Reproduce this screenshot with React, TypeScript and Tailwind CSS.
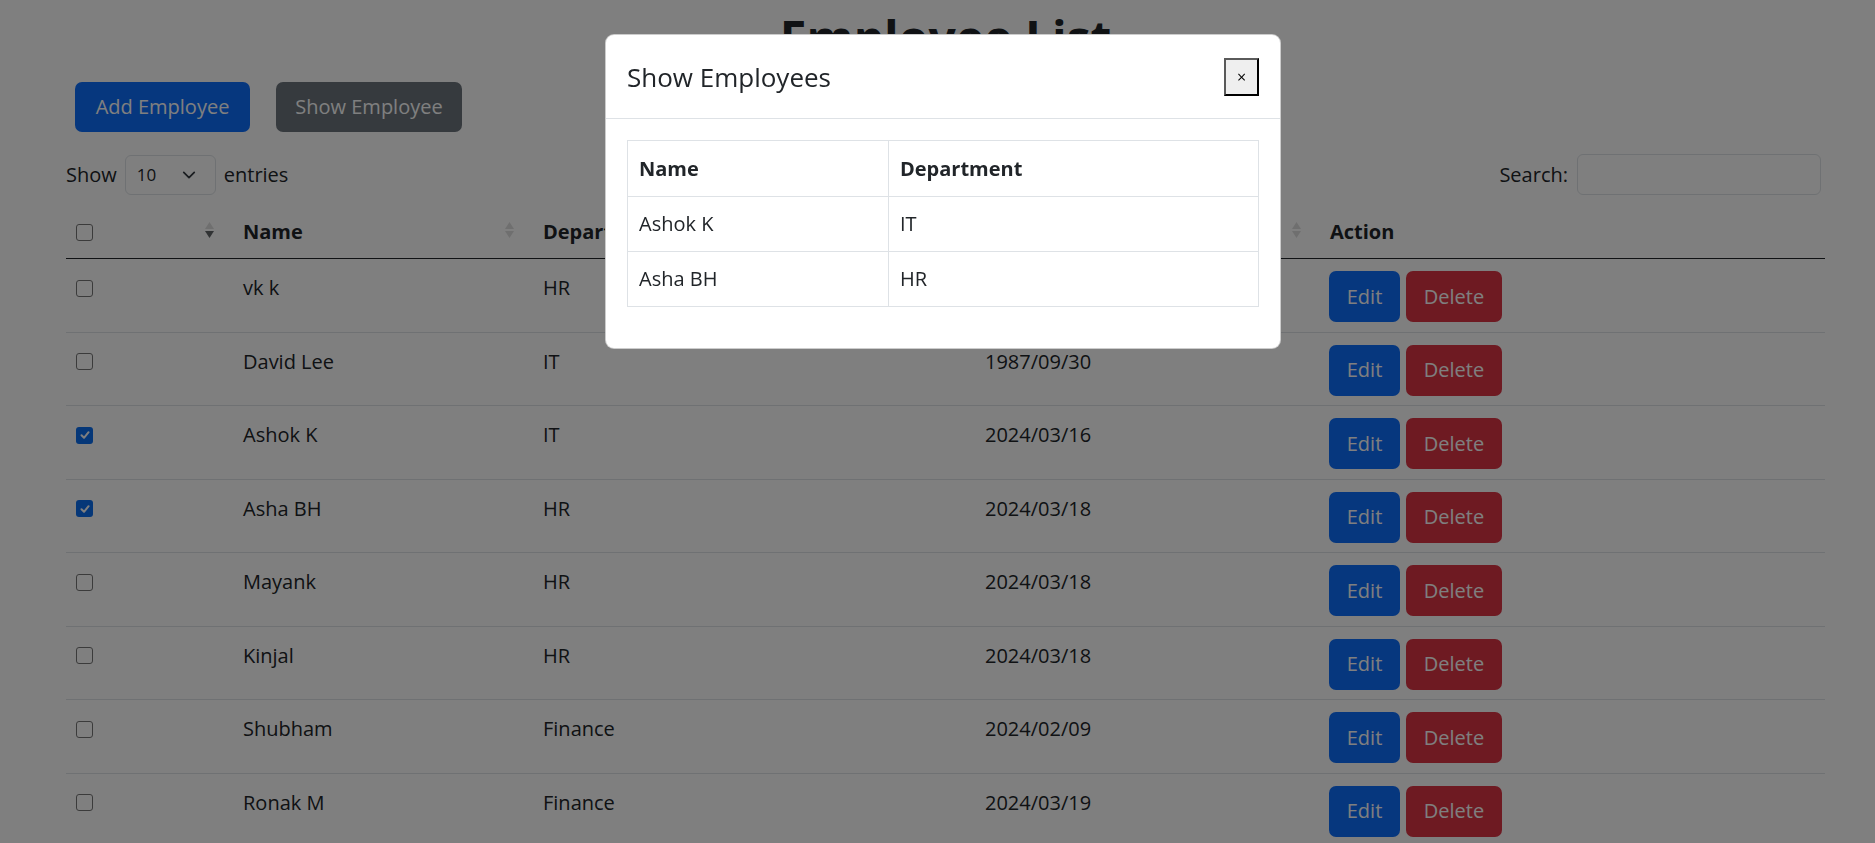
import React from "react";

interface Employee {
  name: string;
  department: string;
  date: string;
  checked: boolean;
}

const EMPLOYEES: Employee[] = [
  { name: "vk k", department: "HR", date: "2024/03/15", checked: false },
  { name: "David Lee", department: "IT", date: "1987/09/30", checked: false },
  { name: "Ashok K", department: "IT", date: "2024/03/16", checked: true },
  { name: "Asha BH", department: "HR", date: "2024/03/18", checked: true },
  { name: "Mayank", department: "HR", date: "2024/03/18", checked: false },
  { name: "Kinjal", department: "HR", date: "2024/03/18", checked: false },
  { name: "Shubham", department: "Finance", date: "2024/02/09", checked: false },
  { name: "Ronak M", department: "Finance", date: "2024/03/19", checked: false },
];

function Checkbox({ checked }: { checked: boolean }) {
  if (checked) {
    return (
      <span className="flex h-[17px] w-[17px] items-center justify-center rounded-[3px] bg-[#0b6ef0]">
        <svg width="12" height="12" viewBox="0 0 12 12">
          <path d="M2.5 6.3 5 8.8 9.6 3.2" fill="none" stroke="#fff" strokeWidth="2" strokeLinecap="round" strokeLinejoin="round" />
        </svg>
      </span>
    );
  }
  return <span className="block h-[17px] w-[17px] rounded-[3px] border-[1.5px] border-[#767676] bg-white" />;
}

// flechinhas de ordenação (estilo DataTables)
function SortArrows({ active }: { active?: boolean }) {
  return (
    <span className="absolute right-[19px] top-[15px] flex flex-col items-center gap-[2px]">
      <svg width="9" height="7" viewBox="0 0 9 7">
        <path d="M4.5 0 9 7H0z" fill="#212529" fillOpacity="0.15" />
      </svg>
      <svg width="9" height="7" viewBox="0 0 9 7">
        <path d="M0 0h9L4.5 7z" fill="#212529" fillOpacity={active ? 0.7 : 0.15} />
      </svg>
    </span>
  );
}

export default function App() {
  return (
    <div className="relative min-h-screen overflow-hidden bg-white font-['Open_Sans',sans-serif] text-[20px] text-[#212529]">
      <div className="pl-[66px] pr-[50px]">
        {/* Header */}
        <h1 className="pt-[8px] text-center text-[48px] font-bold leading-[60px]">Employee List</h1>

        <div className="mt-[14px] flex gap-[26px] pl-[9px]">
          <button className="flex h-[50px] w-[175px] items-center justify-center rounded-[7px] bg-[#0d6efd] text-[20px] text-white">
            Add Employee
          </button>
          <button className="flex h-[50px] w-[186px] items-center justify-center rounded-[7px] bg-[#6c757d] text-[20px] text-white">
            Show Employee
          </button>
        </div>

        {/* Controls */}
        <div className="mt-[22px] flex h-[41px] items-center justify-between">
          <div className="flex items-center">
            <span>Show</span>
            <div className="ml-[8px] mr-[8px] flex h-[40px] w-[91px] items-center justify-between rounded-[6px] border border-[#dee2e6] pl-[11px] pr-[17px] text-[17px]">
              <span>10</span>
              <svg width="18" height="14" viewBox="0 0 16 16">
                <path d="m2 5 6 6 6-6" fill="none" stroke="#343a40" strokeWidth="2" strokeLinecap="round" strokeLinejoin="round" />
              </svg>
            </div>
            <span>entries</span>
          </div>
          <div className="flex items-center gap-[9px] pr-[4px]">
            <span>Search:</span>
            <div className="h-[41px] w-[244px] rounded-[6px] border border-[#dee2e6] bg-white" />
          </div>
        </div>

        {/* Table */}
        <table className="mt-[12px] w-full table-fixed border-collapse">
          <colgroup>
            <col className="w-[167px]" />
            <col className="w-[300px]" />
            <col className="w-[442px]" />
            <col className="w-[345px]" />
            <col />
          </colgroup>
          <thead>
            <tr className="border-b border-[#212529]">
              <th className="relative px-[10px] pb-[11px] pt-[10px] text-left leading-[30px]">
                <div className="flex h-[30px] items-center">
                  <Checkbox checked={false} />
                </div>
                <SortArrows active />
              </th>
              <th className="relative px-[10px] pb-[11px] pt-[10px] text-left font-bold leading-[30px]">
                Name
                <SortArrows />
              </th>
              <th className="relative px-[10px] pb-[11px] pt-[10px] text-left font-bold leading-[30px]">
                Department
                <SortArrows />
              </th>
              <th className="relative px-[10px] pb-[11px] pt-[10px] text-left font-bold leading-[30px]">
                Joining Date
                <SortArrows />
              </th>
              <th className="px-[10px] pb-[11px] pt-[10px] text-left font-bold leading-[30px]">Action</th>
            </tr>
          </thead>
          <tbody>
            {EMPLOYEES.map((emp) => (
              <tr key={emp.name} className="border-b border-[#dee2e6]">
                <td className="h-[73.5px] px-[10px] pt-[14px] align-top leading-[30px]">
                  <div className="flex h-[30px] items-center">
                    <Checkbox checked={emp.checked} />
                  </div>
                </td>
                <td className="px-[10px] pt-[14px] align-top leading-[30px]">{emp.name}</td>
                <td className="px-[10px] pt-[14px] align-top leading-[30px]">{emp.department}</td>
                <td className="px-[10px] pt-[14px] align-top leading-[30px]">{emp.date}</td>
                <td className="px-[9px] pt-[12px] align-top">
                  <div className="flex gap-[6px]">
                    <button className="flex h-[51px] w-[71px] items-center justify-center rounded-[7px] bg-[#0d6efd] text-white">
                      Edit
                    </button>
                    <button className="flex h-[51px] w-[96px] items-center justify-center rounded-[7px] bg-[#dc3545] text-white">
                      Delete
                    </button>
                  </div>
                </td>
              </tr>
            ))}
          </tbody>
        </table>
      </div>

      {/* Backdrop */}
      <div className="fixed inset-0 bg-black/50" />

      {/* Modal */}
      <div className="absolute left-[605px] top-[34px] w-[676px] rounded-[9px] border border-black/20 bg-white">
        <div className="flex h-[84px] items-center justify-between border-b border-[#dee2e6] pl-[21px] pr-[21px]">
          <h5 className="text-[26px] font-medium leading-[30px]">Show Employees</h5>
          <button className="flex h-[38px] w-[35px] items-center justify-center border-2 border-b-black border-l-[#5a5a5a] border-r-black border-t-[#5a5a5a] bg-[#efefef] text-[16px] leading-none text-black">
            ×
          </button>
        </div>
        <div className="p-[21px]">
          <table className="mb-[20px] w-full table-fixed border-collapse border border-[#dee2e6]">
            <colgroup>
              <col className="w-[261px]" />
              <col />
            </colgroup>
            <thead>
              <tr className="h-[56px]">
                <th className="border border-[#dee2e6] px-[11px] text-left font-bold">Name</th>
                <th className="border border-[#dee2e6] px-[11px] text-left font-bold">Department</th>
              </tr>
            </thead>
            <tbody>
              {EMPLOYEES.filter((e) => e.checked).map((emp) => (
                <tr key={emp.name} className="h-[55px]">
                  <td className="border border-[#dee2e6] px-[11px]">{emp.name}</td>
                  <td className="border border-[#dee2e6] px-[11px]">{emp.department}</td>
                </tr>
              ))}
            </tbody>
          </table>
        </div>
      </div>
    </div>
  );
}
